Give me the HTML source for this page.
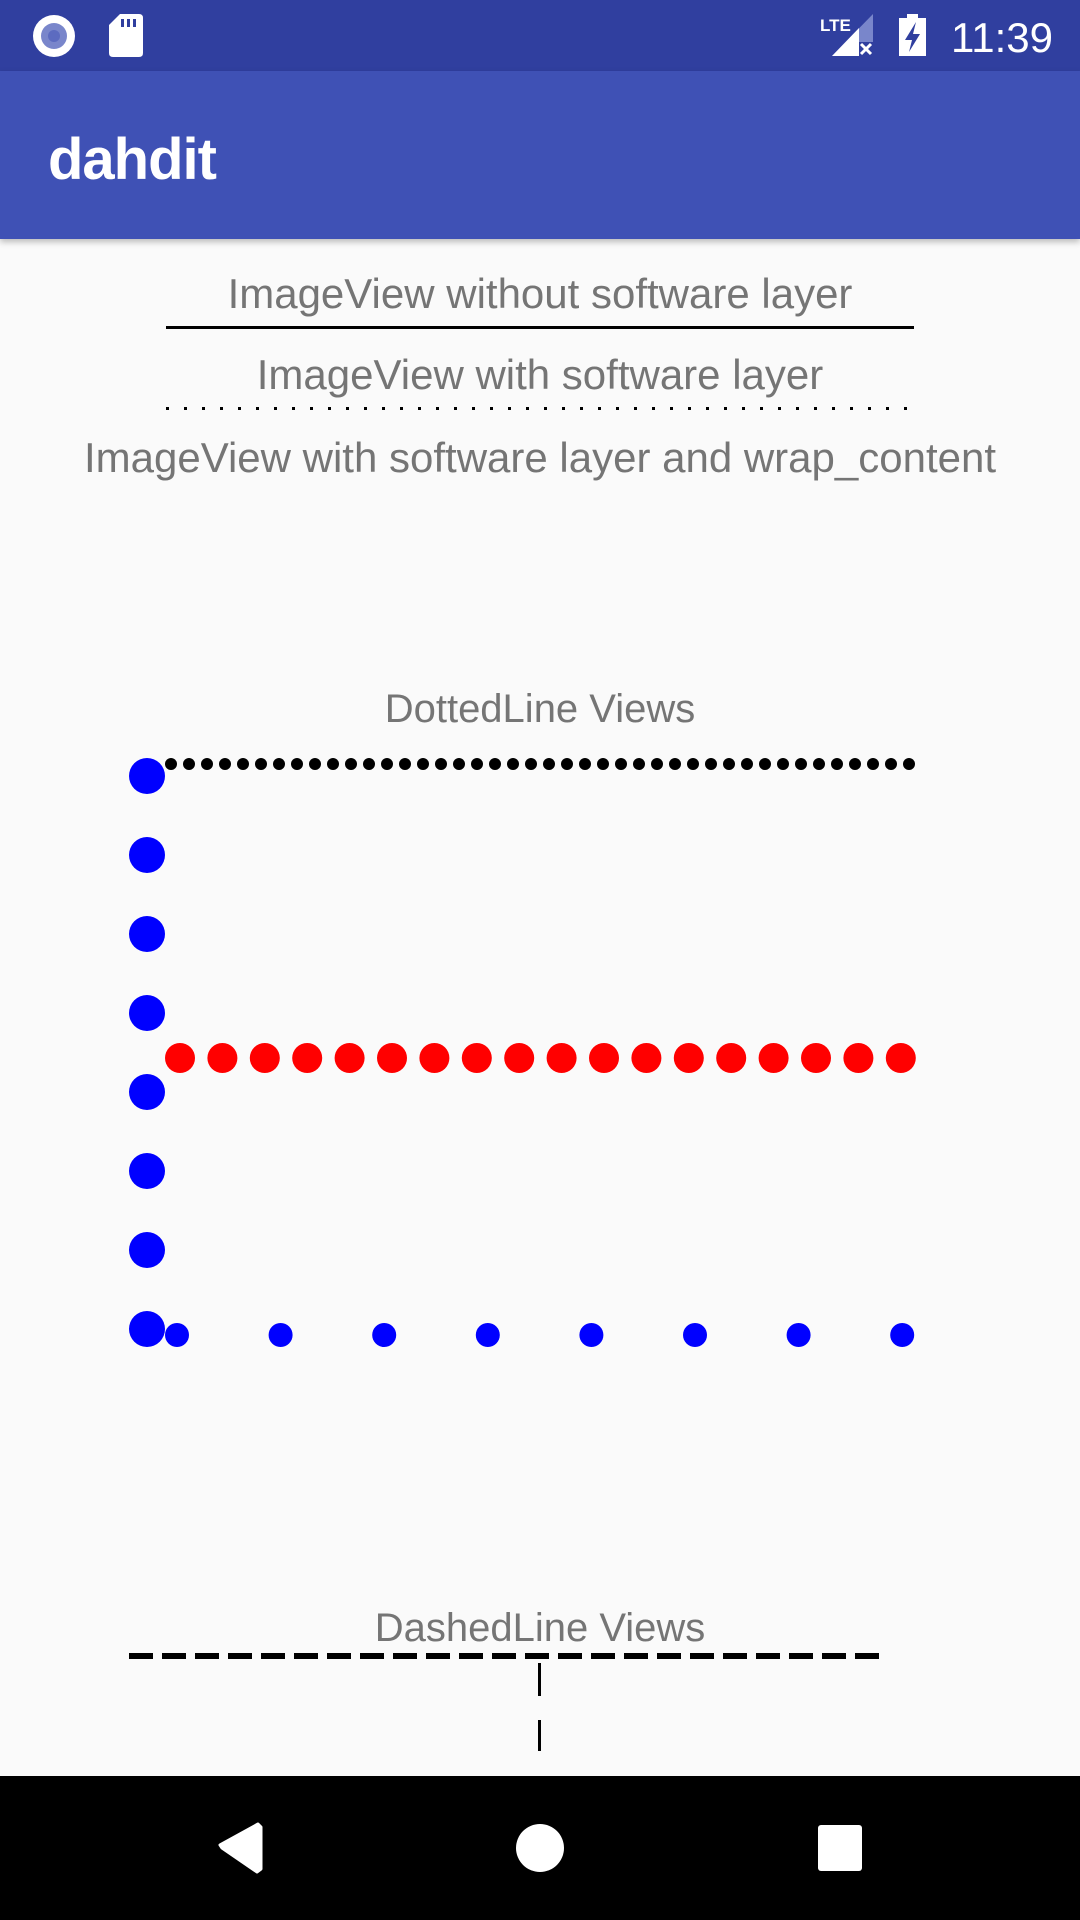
<!DOCTYPE html>
<html><head><meta charset="utf-8"><style>
html,body{margin:0;padding:0;}
body{width:1080px;height:1920px;position:relative;overflow:hidden;background:#fafafa;font-family:"Liberation Sans",sans-serif;}
.t{position:absolute;left:0;width:1080px;text-align:center;color:#757575;font-size:40px;line-height:1;}
.b{font-size:42px;}
</style></head><body>
<div style="position:absolute;left:0;top:0;width:1080px;height:71px;background:#303f9f"></div>
<div style="position:absolute;left:0;top:71px;width:1080px;height:168px;background:#3f51b5;box-shadow:0 3px 6px rgba(0,0,0,0.25)"></div>
<div style="position:absolute;left:48px;top:131px;color:#fff;font-size:58px;font-weight:bold;line-height:1;letter-spacing:-1px">dahdit</div>
<svg style="position:absolute;left:0;top:0" width="1080" height="71">
<circle cx="54" cy="36" r="21" fill="#fff"/><circle cx="54" cy="36" r="13" fill="#7986cb"/><circle cx="54" cy="36" r="6" fill="#5c6bc0"/>
<path d="M120 14 H139 Q143 14 143 18 V53 Q143 57 139 57 H113 Q109 57 109 53 V25 Z" fill="#fff"/>
<rect x="121" y="19" width="3" height="8" fill="#303f9f"/><rect x="127" y="19" width="3" height="8" fill="#303f9f"/><rect x="133" y="19" width="3" height="8" fill="#303f9f"/>
<text x="820" y="31" fill="#fff" font-size="17" font-weight="bold" font-family="Liberation Sans">LTE</text>
<path d="M873 14 V42 H859 V56 H832 Z" fill="#7986cb"/>
<path d="M859 28 V56 H832 Z" fill="#fff"/>
<path d="M861 44 L871 54 M871 44 L861 54" stroke="#fff" stroke-width="3"/>
<path d="M907 14 H918 V18 H926 V56 H899 V18 H907 Z" fill="#fff"/>
<path d="M916 22 L905 40 H912 L909 52 L920 34 H913 Z" fill="#303f9f"/>
<text x="951" y="52" fill="#fff" font-size="42" font-family="Liberation Sans">11:39</text>
</svg>
<div class="t b" style="top:273px">ImageView without software layer</div>
<div style="position:absolute;left:166px;top:326px;width:748px;height:3px;background:#000"></div>
<div class="t b" style="top:354px">ImageView with software layer</div>
<div class="t b" style="top:437px">ImageView with software layer and wrap_content</div>
<div class="t" style="top:689px">DottedLine Views</div>
<div class="t" style="top:1608px">DashedLine Views</div>
<svg style="position:absolute;left:0;top:0" width="1080" height="1920">
<g fill="#000" id="d1"></g>
<g fill="#000" id="d2"></g>
<g fill="#000" id="ds"></g>
<g fill="#f00" id="rd"></g>
<g fill="#00f" id="bd"></g>
<g fill="#00f" id="sb"></g>
<rect x="538" y="1663" width="3" height="33" fill="#000"/>
<rect x="538" y="1720" width="3" height="31" fill="#000"/>
</svg>
<div style="position:absolute;left:0;top:1776px;width:1080px;height:144px;background:#000"></div>
<svg style="position:absolute;left:0;top:1776px" width="1080" height="144">
<path d="M258 48 L261 51 V93 L257 96 L222 72 L220 69 Z" fill="#fff" stroke="#fff" stroke-width="3" stroke-linejoin="round"/>
<circle cx="540" cy="72" r="24" fill="#fff"/>
<rect x="818" y="49" width="44" height="46" rx="3" fill="#fff"/>
</svg>
<script>
function add(id,html){document.getElementById(id).innerHTML=html;}
var s='';for(var i=0;i<42;i++){s+='<rect x="'+(166+i*18)+'" y="407" width="3" height="3"/>';}add('d2',s);
s='';for(i=0;i<42;i++){s+='<circle cx="'+(171+i*18)+'" cy="764" r="6"/>';}add('d1',s);
s='';for(i=0;i<23;i++){s+='<rect x="'+(129+i*33)+'" y="1653" width="24" height="6"/>';}add('ds',s);
s='';for(i=0;i<18;i++){s+='<circle cx="'+(180+i*42.4)+'" cy="1058" r="15"/>';}add('rd',s);
s='';for(i=0;i<8;i++){s+='<circle cx="147" cy="'+(776+i*79)+'" r="18"/>';}add('bd',s);
s='';for(i=0;i<8;i++){s+='<circle cx="'+(177+i*103.6)+'" cy="1335" r="12"/>';}add('sb',s);
</script>
</body></html>
